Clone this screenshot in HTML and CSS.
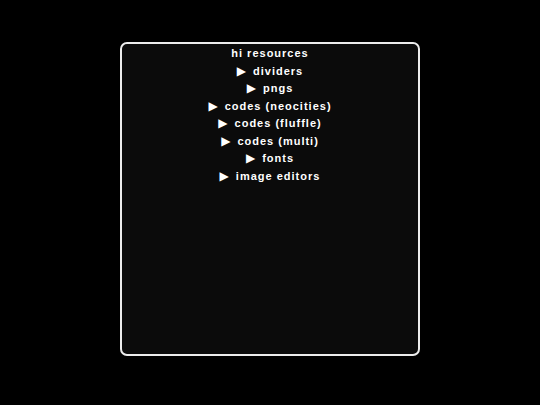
FILE: index.html
```html
<!DOCTYPE html>
<html>
<head>
<meta charset="utf-8">
<link rel="stylesheet" href="styles.css">
</head>
<body>
<div class="stage">
  <div class="box">
    <div class="title">hi resources</div>
    <ul class="list">
      <li><span class="tri">▶</span>dividers</li>
      <li><span class="tri">▶</span>pngs</li>
      <li><span class="tri">▶</span>codes (neocities)</li>
      <li><span class="tri">▶</span>codes (fluffle)</li>
      <li><span class="tri">▶</span>codes (multi)</li>
      <li><span class="tri">▶</span>fonts</li>
      <li><span class="tri">▶</span>image editors</li>
    </ul>
  </div>
</div>
</body>
</html>
```
FILE: styles.css
```css
html, body {
  margin: 0;
  padding: 0;
  background: #000;
}
.stage {
  width: 540px;
  height: 405px;
  display: flex;
  justify-content: center;
  padding-top: 42px;
  box-sizing: border-box;
}
.box {
  width: 300px;
  height: 314px;
  box-sizing: border-box;
  padding-top: 1px;
  border: 2px solid #ececec;
  border-radius: 7px;
  background: #0b0b0b;
  color: #fff;
  font-family: "Liberation Sans", Arial, sans-serif;
  font-weight: bold;
  font-size: 11px;
  letter-spacing: 1px;
  line-height: 17.5px;
  text-align: center;
}
.title {
  margin: 0;
}
.list {
  list-style: none;
  margin: 0;
  padding: 0;
}
.tri {
  font-family: "DejaVu Sans", sans-serif;
  font-size: 12px;
  line-height: 10px;
  margin-right: 6px;
}
```
